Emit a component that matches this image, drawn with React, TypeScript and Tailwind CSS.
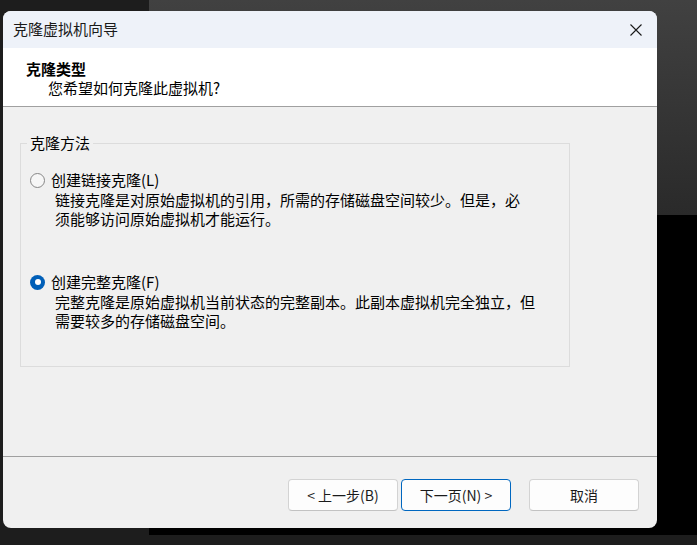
import React from "react";

function Radio({ checked }: { checked?: boolean }) {
  // Win11 风格单选框
  if (checked) {
    return (
      <span className="flex h-[15px] w-[15px] items-center justify-center rounded-full bg-[#005fb8]">
        <span className="h-[6px] w-[6px] rounded-full bg-white" />
      </span>
    );
  }
  return <span className="h-[15px] w-[15px] rounded-full border border-[#868686] bg-[#f6f6f6]" />;
}

function Option({
  label,
  hotkey,
  lines,
  checked,
  className,
}: {
  label: string;
  hotkey: string;
  lines: string[];
  checked?: boolean;
  className?: string;
}) {
  return (
    <div className={className}>
      <label className="flex h-[20px] items-center gap-[6px] pl-[9px]">
        <Radio checked={checked} />
        <span className="leading-[20px]">
          {label}({hotkey})
        </span>
      </label>
      <div className="pl-[34px] leading-[19px]">
        {lines.map((l) => (
          <div key={l}>{l}</div>
        ))}
      </div>
    </div>
  );
}

function WizardButton({ children, primary }: { children: React.ReactNode; primary?: boolean }) {
  return (
    <button
      className={
        primary
          ? "h-[32px] w-[110px] rounded-[4px] border border-[#0067c0] bg-[#fdfdfd] text-[14px] text-[#1a1a1a]"
          : "h-[32px] w-[110px] rounded-[4px] border border-[#d3d3d3] border-b-[#c2c2c2] bg-[#fdfdfd] text-[14px] text-[#1a1a1a]"
      }
    >
      {children}
    </button>
  );
}

export default function App() {
  return (
    <div className="relative h-[545px] w-[697px] overflow-hidden bg-[#1d1d1d] font-['Noto_Sans_CJK_SC','Noto_Sans',sans-serif] text-[15px] text-black">
      {/* 后面的窗口 */}
      <div className="absolute left-[149px] right-0 top-0 h-[535px] bg-black">
        <div className="h-[215px] bg-linear-to-b from-[#414141] to-[#2a2a2a]" />
      </div>

      <div className="relative pl-[3px] pt-[11px]">
        <div className="flex h-[517px] w-[654px] flex-col overflow-hidden rounded-lg bg-[#f0f0f0]">
          {/* 标题栏 */}
          <div className="flex h-[37px] items-center justify-between bg-[#eef2f9] pl-[10px] pr-[15px]">
            <span className="text-[15px] text-[#1a1a1a]">克隆虚拟机向导</span>
            <svg width="12" height="12" viewBox="0 0 12 12" fill="none" stroke="#1a1a1a" strokeWidth="1.1">
              <path d="M0.5 0.5 L11.5 11.5 M11.5 0.5 L0.5 11.5" />
            </svg>
          </div>

          {/* 页头 */}
          <div className="h-[59px] border-b border-[#a0a0a0] bg-white pt-[11px] leading-[19px]">
            <div className="pl-[23px] font-bold">克隆类型</div>
            <div className="pl-[45px]">您希望如何克隆此虚拟机?</div>
          </div>

          {/* 内容 */}
          <div className="flex-1 pl-[17px] pt-[26px]">
            <fieldset className="h-[234px] w-[550px] border border-[#dcdcdc]">
              <legend className="ml-[6px] px-[3px] leading-[20px]">克隆方法</legend>
              <Option
                className="mt-[17px]"
                label="创建链接克隆"
                hotkey="L"
                lines={[
                  "链接克隆是对原始虚拟机的引用，所需的存储磁盘空间较少。但是，必",
                  "须能够访问原始虚拟机才能运行。",
                ]}
              />
              <Option
                className="mt-[44px]"
                checked
                label="创建完整克隆"
                hotkey="F"
                lines={[
                  "完整克隆是原始虚拟机当前状态的完整副本。此副本虚拟机完全独立，但",
                  "需要较多的存储磁盘空间。",
                ]}
              />
            </fieldset>
          </div>

          {/* 按钮 */}
          <div className="flex h-[72px] justify-end border-t border-[#a0a0a0] pr-[18px] pt-[22px]">
            <div className="mr-[3px]">
              <WizardButton>&lt; 上一步(B)</WizardButton>
            </div>
            <div className="mr-[18px]">
              <WizardButton primary>下一页(N) &gt;</WizardButton>
            </div>
            <WizardButton>取消</WizardButton>
          </div>
        </div>
      </div>
    </div>
  );
}
